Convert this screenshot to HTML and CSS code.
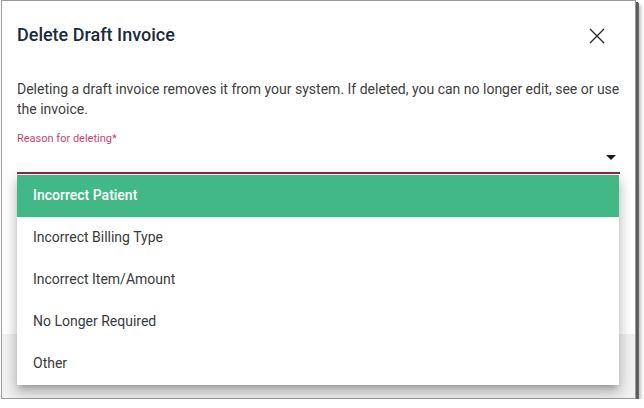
FILE: index.html
```html
<!DOCTYPE html>
<html>
<head>
<meta charset="utf-8">
<link rel="stylesheet" href="styles.css">
</head>
<body>
<div class="dialog">
  <div class="header">
    <h1 class="title">Delete Draft Invoice</h1>
    <button class="close" aria-label="Close">
      <svg width="16" height="16" viewBox="0 0 16 16"><path d="M1 1L15 15M15 1L1 15" stroke="#2b2b2b" stroke-width="1.4" fill="none"/></svg>
    </button>
  </div>
  <div class="content">
    <p class="text">Deleting a draft invoice removes it from your system. If deleted, you can no longer edit, see or use the invoice.</p>
    <div class="field">
      <label class="label">Reason for deleting*</label>
      <div class="select">
        <span class="arrow"></span>
      </div>
    </div>
  </div>
  <div class="footer"></div>
  <ul class="menu">
    <li class="item selected">Incorrect Patient</li>
    <li class="item">Incorrect Billing Type</li>
    <li class="item">Incorrect Item/Amount</li>
    <li class="item">No Longer Required</li>
    <li class="item">Other</li>
  </ul>
</div>
</body>
</html>
```
FILE: styles.css
```css
* { box-sizing: border-box; }
html, body { margin: 0; padding: 0; background: #fff; }
body { font-family: Roboto, "Liberation Sans", Arial, sans-serif; }

.dialog {
  position: relative;
  margin-left: 1px;
  width: 635px;
  height: 399px;
  border: 1px solid #9a9a9a;
  background: #fff;
  display: flex;
  flex-direction: column;
  box-shadow: 2px 2px 0 #5a5a5a, 3px 3px 0 #6a6a6a, 5px 5px 3px rgba(0,0,0,0.25);
}

.header {
  display: flex;
  justify-content: space-between;
  align-items: flex-start;
  padding: 23px 30px 0 15px;
  height: 78px;
}
.title {
  margin: 0;
  font-size: 18px;
  line-height: 22px;
  font-weight: 500;
  color: #1b2a3b;
}
.close {
  border: 0;
  background: none;
  padding: 0;
  margin-top: 4px;
  width: 16px;
  height: 16px;
  display: block;
}
.close svg { display: block; }

.content {
  padding: 0 15px;
}
.text {
  margin: 0;
  font-size: 14px;
  line-height: 20px;
  color: #404040;
}
.field { margin-top: 13px; }
.label {
  display: block;
  font-size: 11px;
  line-height: 14px;
  color: #c9456f;
}
.select {
  height: 28px;
  border-bottom: 2px solid #7b2f4e;
  display: flex;
  justify-content: flex-end;
  padding: 9px 4px 0 0;
}
.arrow {
  width: 0;
  height: 0;
  border-left: 5px solid transparent;
  border-right: 5px solid transparent;
  border-top: 5px solid #1a1a1a;
}

.footer {
  margin-top: auto;
  height: 64px;
  background: #f1f1f1;
}

.menu {
  position: absolute;
  left: 15px;
  top: 174px;
  width: 602px;
  margin: 0;
  padding: 0;
  list-style: none;
  background: #fff;
  box-shadow: 0 5px 5px -3px rgba(0,0,0,0.2), 0 8px 10px 1px rgba(0,0,0,0.14), 0 3px 14px 2px rgba(0,0,0,0.12);
}
.item {
  height: 42px;
  line-height: 40px;
  padding-left: 16px;
  font-size: 14px;
  color: #3a3a3a;
}
.item.selected {
  background: #43b887;
  color: #fff;
  font-weight: 500;
}
```
